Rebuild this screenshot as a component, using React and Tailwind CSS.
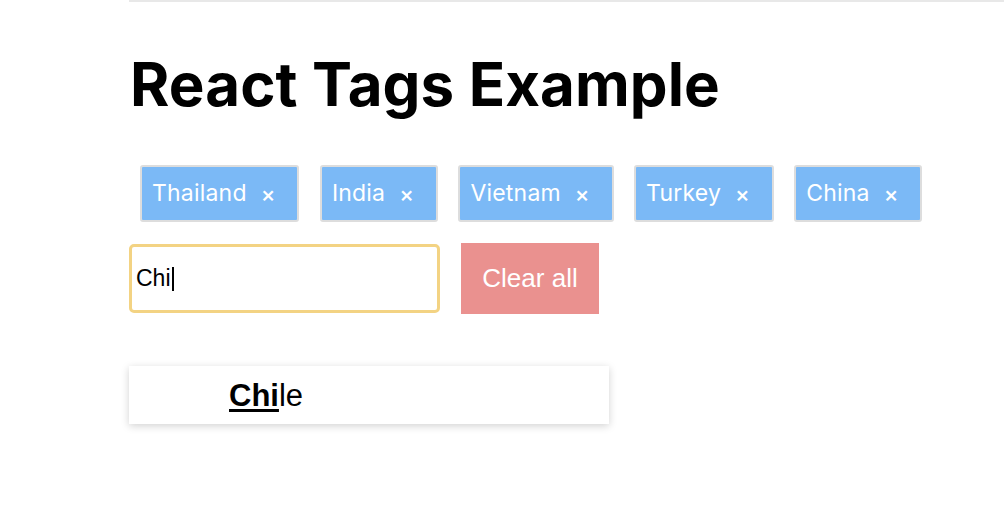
import React from "react";

const tags = ["Thailand", "India", "Vietnam", "Turkey", "China"];

const Tag = ({ label }) => (
  <span className="flex h-[57px] items-center rounded-[3px] border-2 border-[#dddddd] bg-[#7bb9f6] pl-[10px] pr-[22px] text-[23px] tracking-[0.2px] text-white">
    {label}
    <span className="ml-[14px] text-[22px] font-medium leading-none tracking-normal">×</span>
  </span>
);

const App = () => {
  return (
    <div className="min-h-[516px] bg-white font-['Inter',sans-serif]">
      <div className="ml-[129px] border-t-2 border-[#e8e8e8] pl-px">
        <h1 className="mt-[52px] text-[60px] font-bold leading-none tracking-[0.1px] text-black">React Tags Example</h1>

        <div className="mt-[51px] ml-[10px] flex gap-[20.5px]">
          {tags.map((t, i) => (
            <Tag key={i} label={t} />
          ))}
        </div>

        <div className="-ml-px mt-[21px] flex items-center gap-[21px] font-['Liberation_Sans',Arial,sans-serif]">
          <div className="flex h-[69px] w-[311px] items-center rounded-[5px] border-[3px] border-[#f3d383] pl-[4px] text-[23px] text-black">
            Chi
            <span className="ml-px inline-block h-[24px] w-[2px] bg-black" />
          </div>
          <button className="h-[71px] w-[138px] bg-[#ea918f] text-[26px] text-white">Clear all</button>
        </div>

        <div className="-ml-px mt-[52px] flex h-[58px] w-[480px] items-center bg-white pl-[100px] pt-[3px] font-['Liberation_Sans',Arial,sans-serif] text-[31px] text-black shadow-[0_2px_8px_rgba(0,0,0,0.18)]">
          <span className="font-bold underline decoration-[3px] underline-offset-[3px]">Chi</span>
          <span>le</span>
        </div>
      </div>
    </div>
  );
};

export default App;
